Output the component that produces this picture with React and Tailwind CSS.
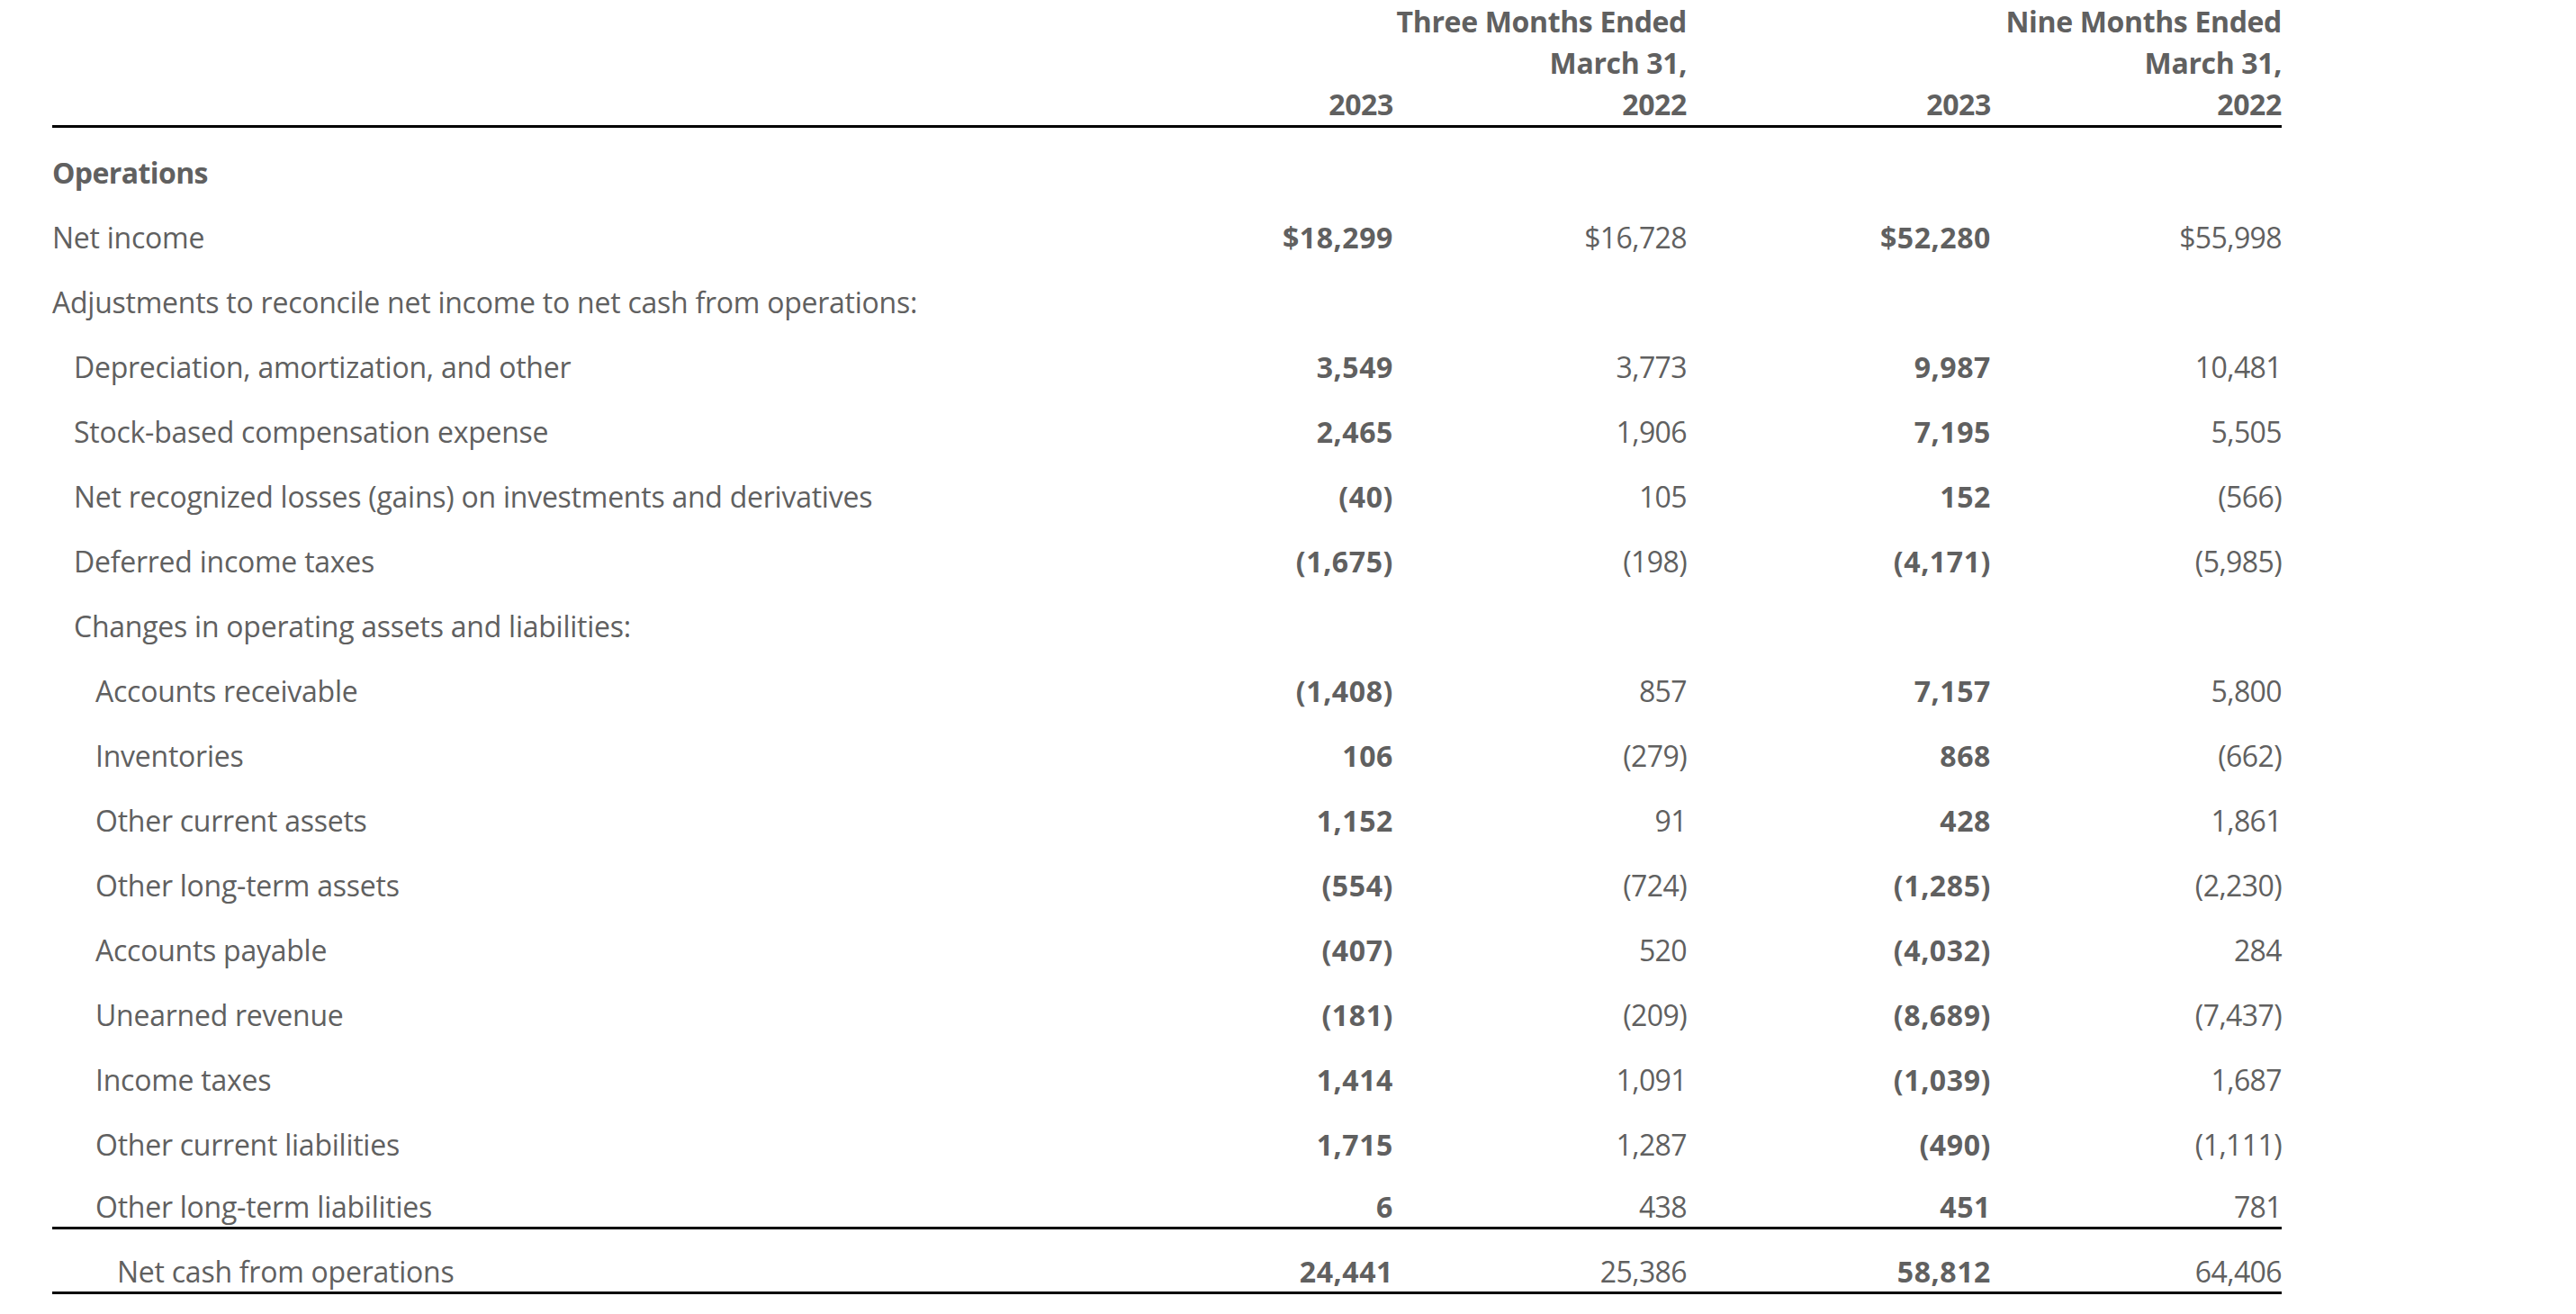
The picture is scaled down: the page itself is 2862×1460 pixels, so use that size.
import React from 'react';

const rows = [
  { label: 'Operations', indent: 0, heading: true },
  { label: 'Net income', indent: 0, values: ['$18,299', '$16,728', '$52,280', '$55,998'] },
  { label: 'Adjustments to reconcile net income to net cash from operations:', indent: 0 },
  { label: 'Depreciation, amortization, and other', indent: 1, values: ['3,549', '3,773', '9,987', '10,481'] },
  { label: 'Stock-based compensation expense', indent: 1, values: ['2,465', '1,906', '7,195', '5,505'] },
  { label: 'Net recognized losses (gains) on investments and derivatives', indent: 1, values: ['(40)', '105', '152', '(566)'] },
  { label: 'Deferred income taxes', indent: 1, values: ['(1,675)', '(198)', '(4,171)', '(5,985)'] },
  { label: 'Changes in operating assets and liabilities:', indent: 1 },
  { label: 'Accounts receivable', indent: 2, values: ['(1,408)', '857', '7,157', '5,800'] },
  { label: 'Inventories', indent: 2, values: ['106', '(279)', '868', '(662)'] },
  { label: 'Other current assets', indent: 2, values: ['1,152', '91', '428', '1,861'] },
  { label: 'Other long-term assets', indent: 2, values: ['(554)', '(724)', '(1,285)', '(2,230)'] },
  { label: 'Accounts payable', indent: 2, values: ['(407)', '520', '(4,032)', '284'] },
  { label: 'Unearned revenue', indent: 2, values: ['(181)', '(209)', '(8,689)', '(7,437)'] },
  { label: 'Income taxes', indent: 2, values: ['1,414', '1,091', '(1,039)', '1,687'] },
  { label: 'Other current liabilities', indent: 2, values: ['1,715', '1,287', '(490)', '(1,111)'] },
  { label: 'Other long-term liabilities', indent: 2, values: ['6', '438', '451', '781'], rule: true },
  { label: 'Net cash from operations', indent: 3, values: ['24,441', '25,386', '58,812', '64,406'], rule: true },
];

const indentClass = ['pl-0', 'pl-[24px]', 'pl-[48px]', 'pl-[72px]'];

const grid = 'grid grid-cols-[1164px_326px_326px_338px_323px]';

function Row({ row }) {
  return (
    <div
      className={`${grid} h-[72px] items-end pb-[2px] leading-[40px] ${
        row.rule ? 'border-b-[3px] border-black' : ''
      }`}
    >
      <div
        className={`${indentClass[row.indent]} whitespace-nowrap ${
          row.heading ? 'font-bold tracking-[-0.6px]' : 'tracking-[-0.25px]'
        }`}
      >
        {row.label}
      </div>
      {(row.values || ['', '', '', '']).map((v, i) => (
        <div
          key={i}
          className={`text-right whitespace-nowrap ${
            i % 2 === 0 ? 'font-bold tracking-[0.6px]' : 'tracking-[-0.6px]'
          }`}
        >
          {v}
        </div>
      ))}
    </div>
  );
}

export default function App() {
  return (
    <div className="w-full min-h-[1460px] bg-white pl-[58px] font-['Open_Sans',sans-serif] text-[32px] text-[#606060]">
      <div className="w-[2477px]">
        {/* Column headers */}
        <div className={`${grid} border-b-[3px] border-black pt-[1px] font-bold leading-[46px] tracking-[-0.35px]`}>
          <div />
          <div className="col-span-2 text-right">
            <div>Three Months Ended</div>
            <div>March 31,</div>
          </div>
          <div className="col-span-2 text-right">
            <div>Nine Months Ended</div>
            <div>March 31,</div>
          </div>
          <div />
          <div className="text-right">2023</div>
          <div className="text-right">2022</div>
          <div className="text-right">2023</div>
          <div className="text-right">2022</div>
        </div>

        {rows.map((row) => (
          <Row key={row.label} row={row} />
        ))}
      </div>
    </div>
  );
}
